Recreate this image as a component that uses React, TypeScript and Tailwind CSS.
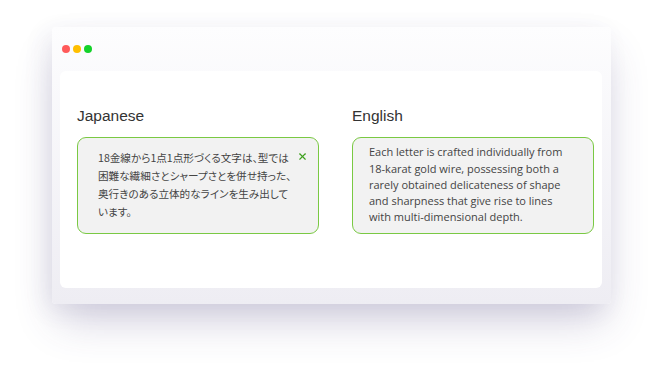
import { X } from 'lucide-react'

const JA = ['18金線から1点1点形づくる文字は、型では', '困難な繊細さとシャープさとを併せ持った、', '奥行きのある立体的なラインを生み出して', 'います。']
const EN =
  'Each letter is crafted individually from 18-karat gold wire, possessing both a rarely obtained delicateness of shape and sharpness that give rise to lines with multi-dimensional depth.'

export default function App() {
  return (
    <div className="h-[375px] w-[650px] overflow-hidden bg-white pl-[52px] pt-[27px]" style={{ fontFamily: '"Open Sans", "Noto Sans", sans-serif' }}>
      <div className="flex h-[277px] w-[559px] flex-col rounded-[4px] bg-gradient-to-b from-[#fdfdfe] to-[#eeedf3] shadow-[0_22px_40px_-6px_rgba(70,60,120,0.24),-6px_6px_24px_rgba(70,60,120,0.08)]">
        <div className="flex h-[44px] items-center gap-[3px] pl-[10px]">
          <span className="h-[8px] w-[8px] rounded-full bg-[#ff5a5a]" />
          <span className="h-[8px] w-[8px] rounded-full bg-[#ffbf00]" />
          <span className="h-[8px] w-[8px] rounded-full bg-[#14d22a]" />
        </div>
        <div className="mx-[8px] grid h-[217px] w-[542px] grid-cols-[242px_242px] gap-[33px] rounded-[6px] bg-white pl-[17px] pr-[8px] pt-[33px]">
          <div>
            <h2 className="mb-[10px] text-[15.5px] text-[#333]" style={{ fontFamily: '"Liberation Sans", Arial, sans-serif' }}>
              Japanese
            </h2>
            <div className="relative h-[97px] rounded-[9px] border border-[#7ac943] bg-[#f2f2f2] pl-[20px] pr-[20px] pt-[11px]">
              <p
                className="whitespace-nowrap text-[10.6px] leading-[17.8px] text-[#444]"
                style={{ fontFamily: '"Noto Sans CJK JP", sans-serif', fontFeatureSettings: '"palt"' }}
              >
                {JA.map((l) => (
                  <span key={l} className="block">
                    {l}
                  </span>
                ))}
              </p>
              <X className="absolute right-[10px] top-[13px] h-[11px] w-[11px] text-[#3fa01f]" strokeWidth={2.5} />
            </div>
          </div>
          <div>
            <h2 className="mb-[10px] text-[15.5px] text-[#333]" style={{ fontFamily: '"Liberation Sans", Arial, sans-serif' }}>
              English
            </h2>
            <div className="h-[97px] rounded-[9px] border border-[#7ac943] bg-[#f2f2f2] pl-[16px] pr-[20px] pt-[6px]">
              <p className="text-[11px] leading-[16.3px] text-[#444]">{EN}</p>
            </div>
          </div>
        </div>
      </div>
    </div>
  )
}
